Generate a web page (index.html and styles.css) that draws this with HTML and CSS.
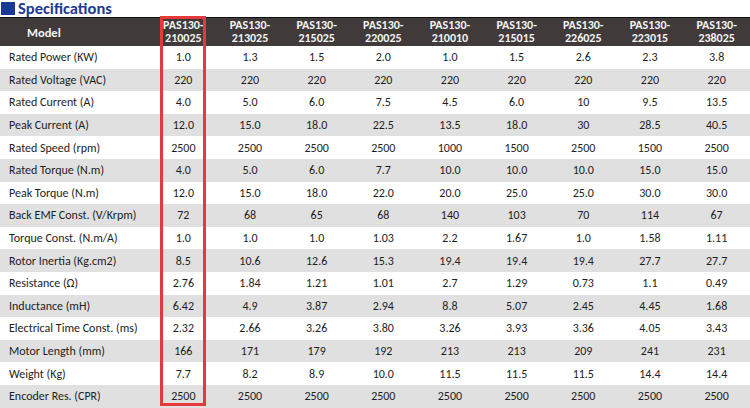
FILE: index.html
```html
<!DOCTYPE html>
<html>
<head>
<meta charset="utf-8">
<link rel="stylesheet" href="styles.css">
</head>
<body>
<div class="page">
  <h1 class="title"><span class="square"></span><span class="title-text">Specifications</span></h1>
  <table class="spec">
    <colgroup><col class="c-label"><col><col><col><col><col><col><col><col><col></colgroup>
    <thead>
      <tr>
        <th class="model">Model</th>
        <th>PAS130-<br>210025</th>
        <th>PAS130-<br>213025</th>
        <th>PAS130-<br>215025</th>
        <th>PAS130-<br>220025</th>
        <th>PAS130-<br>210010</th>
        <th>PAS130-<br>215015</th>
        <th>PAS130-<br>226025</th>
        <th>PAS130-<br>223015</th>
        <th>PAS130-<br>238025</th>
      </tr>
    </thead>
    <tbody>
      <tr><td>Rated Power (KW)</td><td>1.0</td><td>1.3</td><td>1.5</td><td>2.0</td><td>1.0</td><td>1.5</td><td>2.6</td><td>2.3</td><td>3.8</td></tr>
      <tr><td>Rated Voltage (VAC)</td><td>220</td><td>220</td><td>220</td><td>220</td><td>220</td><td>220</td><td>220</td><td>220</td><td>220</td></tr>
      <tr><td>Rated Current (A)</td><td>4.0</td><td>5.0</td><td>6.0</td><td>7.5</td><td>4.5</td><td>6.0</td><td>10</td><td>9.5</td><td>13.5</td></tr>
      <tr><td>Peak Current (A)</td><td>12.0</td><td>15.0</td><td>18.0</td><td>22.5</td><td>13.5</td><td>18.0</td><td>30</td><td>28.5</td><td>40.5</td></tr>
      <tr><td>Rated Speed (rpm)</td><td>2500</td><td>2500</td><td>2500</td><td>2500</td><td>1000</td><td>1500</td><td>2500</td><td>1500</td><td>2500</td></tr>
      <tr><td>Rated Torque (N.m)</td><td>4.0</td><td>5.0</td><td>6.0</td><td>7.7</td><td>10.0</td><td>10.0</td><td>10.0</td><td>15.0</td><td>15.0</td></tr>
      <tr><td>Peak Torque (N.m)</td><td>12.0</td><td>15.0</td><td>18.0</td><td>22.0</td><td>20.0</td><td>25.0</td><td>25.0</td><td>30.0</td><td>30.0</td></tr>
      <tr><td>Back EMF Const. (V/Krpm)</td><td>72</td><td>68</td><td>65</td><td>68</td><td>140</td><td>103</td><td>70</td><td>114</td><td>67</td></tr>
      <tr><td>Torque Const. (N.m/A)</td><td>1.0</td><td>1.0</td><td>1.0</td><td>1.03</td><td>2.2</td><td>1.67</td><td>1.0</td><td>1.58</td><td>1.11</td></tr>
      <tr><td>Rotor Inertia (Kg.cm2)</td><td>8.5</td><td>10.6</td><td>12.6</td><td>15.3</td><td>19.4</td><td>19.4</td><td>19.4</td><td>27.7</td><td>27.7</td></tr>
      <tr><td>Resistance (Ω)</td><td>2.76</td><td>1.84</td><td>1.21</td><td>1.01</td><td>2.7</td><td>1.29</td><td>0.73</td><td>1.1</td><td>0.49</td></tr>
      <tr><td>Inductance (mH)</td><td>6.42</td><td>4.9</td><td>3.87</td><td>2.94</td><td>8.8</td><td>5.07</td><td>2.45</td><td>4.45</td><td>1.68</td></tr>
      <tr><td>Electrical Time Const. (ms)</td><td>2.32</td><td>2.66</td><td>3.26</td><td>3.80</td><td>3.26</td><td>3.93</td><td>3.36</td><td>4.05</td><td>3.43</td></tr>
      <tr><td>Motor Length (mm)</td><td>166</td><td>171</td><td>179</td><td>192</td><td>213</td><td>213</td><td>209</td><td>241</td><td>231</td></tr>
      <tr><td>Weight (Kg)</td><td>7.7</td><td>8.2</td><td>8.9</td><td>10.0</td><td>11.5</td><td>11.5</td><td>11.5</td><td>14.4</td><td>14.4</td></tr>
      <tr><td>Encoder Res. (CPR)</td><td>2500</td><td>2500</td><td>2500</td><td>2500</td><td>2500</td><td>2500</td><td>2500</td><td>2500</td><td>2500</td></tr>
    </tbody>
  </table>
  <div class="highlight"></div>
</div>
</body>
</html>
```
FILE: styles.css
```css
html, body {
  margin: 0;
  padding: 0;
  background: #ffffff;
}
.page {
  position: relative;
  width: 750px;
  height: 408px;
  overflow: hidden;
  font-family: Carlito, Lato, "Open Sans", sans-serif;
}
.title {
  margin: 0;
  height: 17px;
  display: flex;
  align-items: flex-end;
  font-size: 16.5px;
  font-weight: 700;
  color: #1d3b8f;
  padding-left: 1px;
}
.title-text {
  line-height: 17px;
  display: block;
}
.square {
  display: block;
  width: 14px;
  height: 13px;
  background: #1b3a96;
  margin-right: 3px;
  margin-bottom: 2px;
}
.spec {
  width: 750px;
  border-collapse: collapse;
  table-layout: fixed;
  border-top: 1.5px solid #111;
}
.c-label { width: 150px; }
.spec th {
  height: 28px;
  padding: 0;
  background: #403b3a;
  color: #f4f4f4;
  font-size: 12px;
  line-height: 13px;
  font-weight: 700;
  text-align: center;
}
.spec th.model {
  text-align: left;
  padding-left: 27px;
  font-size: 12.5px;
}
.spec td {
  height: 22.6px;
  padding: 0;
  font-size: 12px;
  color: #1e1e1e;
  text-align: center;
  white-space: nowrap;
}
.spec td:first-child {
  text-align: left;
  padding-left: 9px;
}
.spec tbody tr:nth-child(even) td {
  background: #e0e0e0;
}
.highlight {
  position: absolute;
  left: 160px;
  top: 16px;
  width: 40px;
  height: 384px;
  border: 3px solid #e6393b;
}
```
